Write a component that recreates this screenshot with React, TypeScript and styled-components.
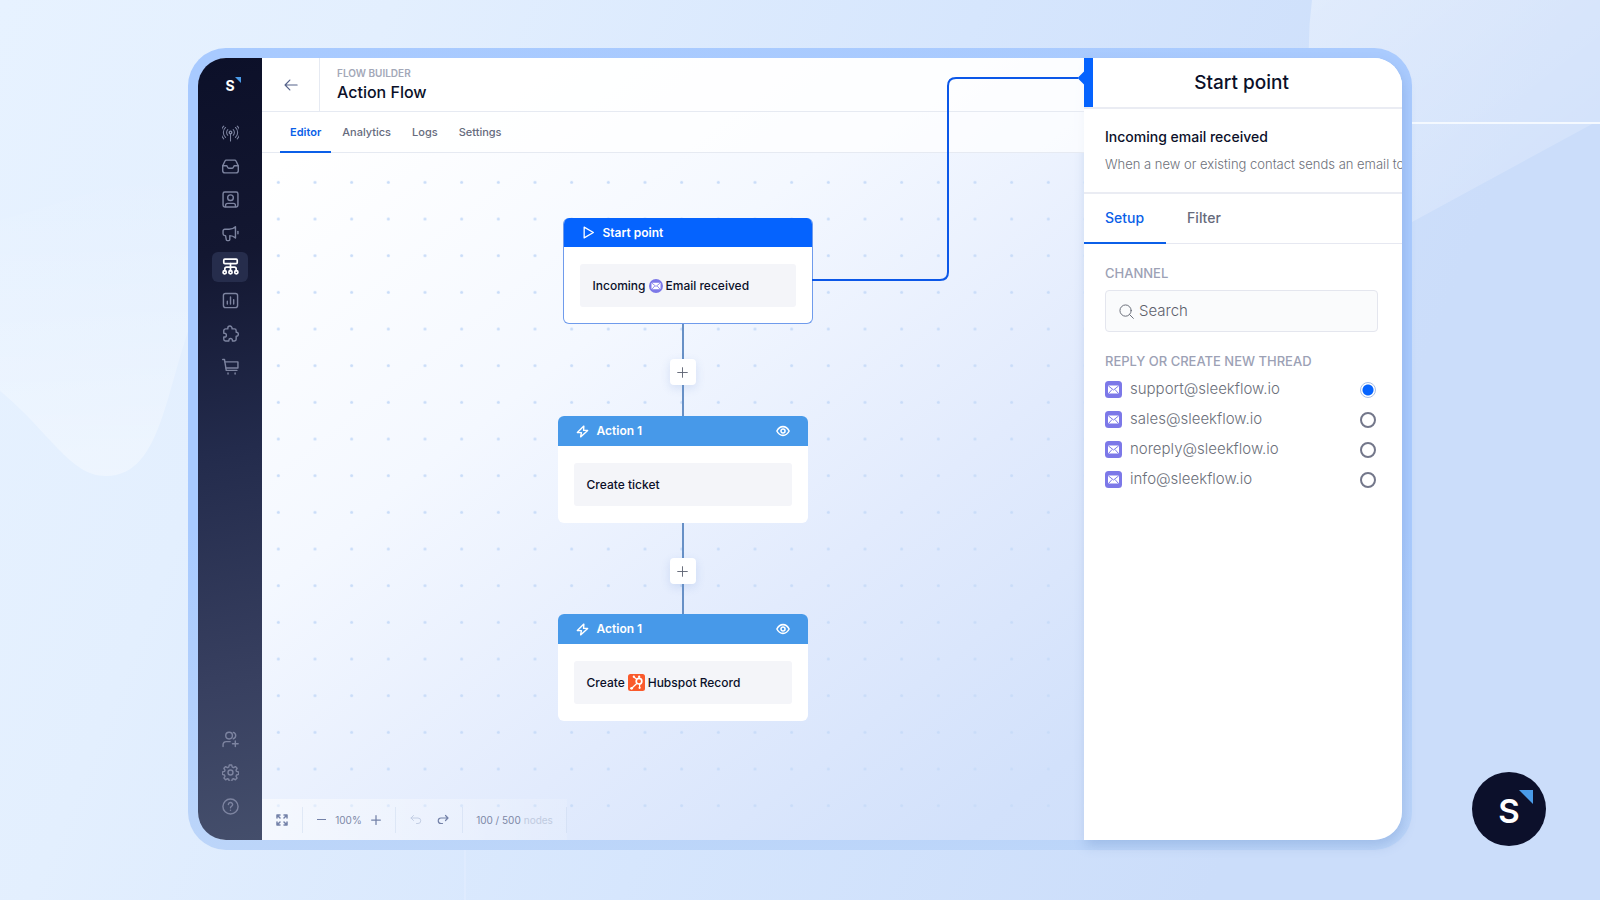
import React, { useState } from "react";
import styled, { createGlobalStyle, css } from "styled-components";

const GlobalStyle = createGlobalStyle`
  *, *::before, *::after { box-sizing: border-box; }
  body {
    margin: 0;
    font-family: Inter, "Liberation Sans", sans-serif;
    color: #0b1029;
    background: linear-gradient(112deg, #e7f2ff 0%, #e3effe 20%, #d6e6fd 50%, #cbddfa 80%, #cbddfa 100%);
  }
  button, input { font: inherit; color: inherit; }
  button { border: 0; padding: 0; background: none; cursor: pointer; }
  a { color: inherit; text-decoration: none; }
`;

const Page = styled.div`
  position: relative;
  min-height: 100vh;
  display: flex;
  padding: 48px 188px 50px;
  overflow: hidden;
`;

const Backdrop = styled.svg`
  position: absolute;
  inset: 0;
  width: 100%;
  height: 100%;
`;

const Frame = styled.div`
  position: relative;
  flex: 1;
  display: flex;
  padding: 10px;
  border-radius: 38px;
  background: linear-gradient(180deg, rgba(168, 202, 255, 0) 60%, rgba(193, 216, 248, 0.8) 100%),
    linear-gradient(90deg, #a8caff, #aacbfe);
`;

const Screen = styled.div`
  flex: 1;
  display: flex;
  min-width: 0;
  border-radius: 30px;
  background: linear-gradient(142deg, #ffffff 10%, #f4f8ff 34%, #e2ebfd 58%, #d2e1fb 80%, #cbddfa 100%);
`;

const Sidebar = styled.nav`
  width: 64px;
  flex: none;
  display: flex;
  flex-direction: column;
  align-items: center;
  padding: 16px 0 19px;
  border-radius: 28px 0 0 28px;
  background: linear-gradient(170deg, #0c1029 0%, #131731 25%, #232b4c 50%, #384060 80%, #444e6b 100%);
`;

const Wordmark = styled.a<{ $size: number }>`
  position: relative;
  display: grid;
  place-items: center;
  width: ${(p) => p.$size}px;
  height: ${(p) => p.$size}px;
  color: #fff;
  font-weight: 600;
`;

const SmallMark = styled(Wordmark)`
  font-size: 14px;
  font-weight: 700;
  line-height: 24px;
  svg { position: absolute; top: 3px; right: 0; }
`;

const NavList = styled.div<{ $height: number; $top?: boolean }>`
  display: flex;
  flex-direction: column;
  justify-content: space-between;
  height: ${(p) => p.$height}px;
  ${(p) => (p.$top ? "margin-top: 22px;" : "margin-top: auto;")}
`;

const NavButton = styled.button<{ $active?: boolean }>`
  display: grid;
  place-items: center;
  width: 36px;
  height: 30px;
  border-radius: 6px;
  color: ${(p) => (p.$active ? "#ffffff" : "#7d84a0")};
  background: ${(p) => (p.$active ? "#262d4c" : "transparent")};
`;

const Main = styled.main`
  position: relative;
  flex: 1;
  min-width: 0;
  display: flex;
  flex-direction: column;
`;

const TopBar = styled.header`
  display: flex;
  height: 54px;
  border-bottom: 1px solid #e6eaf2;
  background: rgba(255, 255, 255, 0.8);
`;

const BackButton = styled.button`
  display: grid;
  place-items: center;
  width: 58px;
  border-right: 1px solid #e6eaf2;
  color: #55628a;
`;

const Titles = styled.div`
  padding: 8px 0 0 17px;
`;

const Eyebrow = styled.div`
  font-size: 10px;
  font-weight: 600;
  line-height: 14px;
  color: #a3a8b8;
`;

const Title = styled.h1`
  margin: 0;
  font-size: 16px;
  font-weight: 500;
  line-height: 24px;
`;

const Tabs = styled.div`
  display: flex;
  gap: 1px;
  height: 41px;
  padding-left: 18px;
  border-bottom: 1px solid #e6eaf2;
  background: rgba(255, 255, 255, 0.7);
`;

const Tab = styled.button<{ $active?: boolean }>`
  height: 41px;
  padding: 0 10px;
  font-size: 11px;
  font-weight: ${(p) => (p.$active ? 600 : 500)};
  line-height: 40px;
  color: ${(p) => (p.$active ? "#0b5fe8" : "#666b7d")};
  border-bottom: 2px solid ${(p) => (p.$active ? "#0b5fe8" : "transparent")};
`;

const Canvas = styled.section`
  position: relative;
  flex: 1;
  display: flex;
  flex-direction: column;
  padding: 65px 0 0;
`;

const Dots = styled.svg`
  position: absolute;
  inset: 0;
  width: 100%;
  height: 100%;
`;

const Flow = styled.div`
  position: relative;
  display: flex;
  flex-direction: column;
  align-items: center;
  padding-left: 19px;
`;

const Node = styled.article<{ $start?: boolean }>`
  width: 250px;
  height: 107px;
  border-radius: 6px;
  overflow: hidden;
  background: #fff;
  ${(p) =>
    p.$start &&
    css`
      height: 106px;
      border: 1px solid #6f9bec;
      border-top: 0;
      margin-left: 10px;
    `}
`;

const NodeHead = styled.header<{ $start?: boolean }>`
  display: flex;
  align-items: center;
  gap: 8px;
  height: ${(p) => (p.$start ? 29 : 30)}px;
  padding: 0 18px;
  color: #fff;
  font-size: 12px;
  font-weight: 600;
  line-height: 16px;
  background: ${(p) => (p.$start ? "#0563fe" : "#4799e9")};
`;

const NodeName = styled.span`
  flex: 1;
`;

const NodeBody = styled.div`
  display: flex;
  align-items: center;
  gap: 3px;
  height: 43px;
  margin: 17px 16px;
  padding: 0 13px;
  border-radius: 3px;
  background: #f4f5f9;
  font-size: 12px;
  font-weight: 500;
  line-height: 16px;
`;

const Link = styled.div<{ $height: number }>`
  width: 2px;
  height: ${(p) => p.$height}px;
  background: #6790c6;
`;

const AddButton = styled.button`
  display: grid;
  place-items: center;
  width: 26px;
  height: 26px;
  border-radius: 4px;
  background: #fff;
  color: #5d6272;
  box-shadow: 0 3px 10px rgba(70, 110, 190, 0.16);
`;

const Footer = styled.footer`
  position: absolute;
  left: 0;
  bottom: 0;
  display: flex;
  align-items: center;
  height: 41px;
  background: linear-gradient(90deg, rgba(255, 255, 255, 0.5), rgba(255, 255, 255, 0.12));
  color: #7d88a6;
  font-size: 10px;
  line-height: 16px;
`;

const FooterGroup = styled.div<{ $width: number; $gap?: number }>`
  display: flex;
  align-items: center;
  justify-content: center;
  gap: ${(p) => p.$gap ?? 8}px;
  width: ${(p) => p.$width}px;
  height: 26px;
  border-right: 1px solid rgba(190, 205, 232, 0.35);
  white-space: nowrap;
`;

const IconButton = styled.button<{ $faint?: boolean }>`
  display: grid;
  place-items: center;
  color: ${(p) => (p.$faint ? "#c3cee4" : "#7381a8")};
`;

const Faint = styled.span`
  color: #c0cbe0;
`;

const Wire = styled.svg`
  position: absolute;
  top: 0;
  right: 0;
  width: 272px;
  height: 240px;
  pointer-events: none;
`;

const Panel = styled.aside`
  flex: none;
  width: 318px;
  overflow: hidden;
  border-radius: 0 28px 28px 0;
  background: #fff;
`;

const PanelShade = styled.div`
  display: flex;
  border-radius: 0 28px 28px 0;
  box-shadow: 2px 6px 12px rgba(90, 130, 190, 0.28);
`;

const PanelHead = styled.header`
  height: 51px;
  border-bottom: 2px solid #eaecf3;
  background: linear-gradient(90deg, #0563fe 9px, #fff 9px);
  background-clip: padding-box;
  padding-right: 3px;
`;

const PanelTitle = styled.h2`
  margin: 0;
  text-align: center;
  font-size: 19px;
  font-weight: 500;
  line-height: 49px;
`;

const Summary = styled.div`
  height: 85px;
  padding: 16px 0 0 21px;
  border-bottom: 2px solid #eaecf3;
  white-space: nowrap;
`;

const SummaryTitle = styled.h3`
  margin: 0;
  font-size: 14px;
  font-weight: 500;
  line-height: 24px;
`;

const SummaryText = styled.p`
  margin: 5px 0 0;
  font-size: 13px;
  font-weight: 300;
  line-height: 20px;
  color: #6d7079;
`;

const PanelTabs = styled.div`
  display: flex;
  height: 50px;
  border-bottom: 1px solid #e6e8f1;
`;

const PanelTab = styled.button<{ $active?: boolean }>`
  height: 50px;
  padding: 0 22px 0 21px;
  font-size: 14px;
  font-weight: 500;
  line-height: 48px;
  color: ${(p) => (p.$active ? "#0b5fe8" : "#666a7b")};
  border-bottom: 2px solid ${(p) => (p.$active ? "#0b5fe8" : "transparent")};
`;

const PanelBody = styled.div`
  padding: 19px 24px 20px 21px;
`;

const labelStyle = css`
  display: block;
  padding: 0;
  font-size: 13px;
  font-weight: 500;
  line-height: 20px;
  color: #9ca1b5;
`;

const FieldLabel = styled.label`
  ${labelStyle}
`;

const SearchBox = styled.div`
  display: flex;
  align-items: center;
  gap: 5px;
  height: 42px;
  margin: 7px 0 19px;
  padding: 0 13px;
  border: 1px solid #e4e6ee;
  border-radius: 4px;
  background: #fafbfc;
  color: #6b6f7a;
`;

const SearchInput = styled.input`
  flex: 1;
  min-width: 0;
  padding: 0;
  border: 0;
  outline: 0;
  background: transparent;
  font-size: 15px;
  font-weight: 300;
  line-height: 20px;
  &::placeholder { color: #5d616c; opacity: 1; }
`;

const Choices = styled.fieldset`
  min-width: 0;
  margin: 0;
  padding: 0;
  border: 0;
`;

const Legend = styled.legend`
  ${labelStyle}
  margin-bottom: 3px;
`;

const Choice = styled.label`
  display: flex;
  align-items: center;
  gap: 8px;
  height: 30px;
  padding-right: 2px;
  color: #6b6f7a;
  font-size: 15px;
  font-weight: 300;
  line-height: 20px;
  cursor: pointer;
`;

const Radio = styled.input`
  appearance: none;
  width: 16px;
  height: 16px;
  margin: 2px 0 0 auto;
  border: 2px solid #73778a;
  border-radius: 50%;
  &:checked {
    border: 1px solid #a9bfe6;
    background: radial-gradient(circle, #0563fe 5px, #fff 6px);
  }
`;

const Bubble = styled(Wordmark)`
  position: absolute;
  right: 54px;
  bottom: 54px;
  border-radius: 50%;
  background: #0c102b;
  font-size: 33px;
  line-height: 40px;
  padding-top: 3px;
  svg { position: absolute; top: 18px; right: 13px; }
`;

type StrokeProps = { size?: number; width?: number; children: React.ReactNode };

const Stroke = ({ size = 17, width = 2, children }: StrokeProps) => (
  <svg width={size} height={size} viewBox="0 0 24 24" fill="none" stroke="currentColor"
    strokeWidth={width} strokeLinecap="round" strokeLinejoin="round" aria-hidden="true">
    {children}
  </svg>
);

const navIcons: { name: string; icon: React.ReactNode; active?: boolean }[] = [
  {
    name: "Channels",
    icon: (
      <>
        <circle cx="12" cy="10.500" r="1.800" />
        <path d="M12 12.500v10M8.200 14.500a5.500 5.500 0 0 1 0-8M15.800 14.500a5.500 5.500 0 0 0 0-8M5 17.500a9.500 9.500 0 0 1 0-14M19 17.500a9.500 9.500 0 0 0 0-14M2.500 19.500a12.500 12.500 0 0 1 0-18M21.500 19.500a12.500 12.500 0 0 0 0-18" strokeWidth="1.500" />
      </>
    ),
  },
  {
    name: "Inbox",
    icon: (
      <>
        <path d="M6 3h12a2 2 0 0 1 1.800 1.200L23 11v7a3 3 0 0 1-3 3H4a3 3 0 0 1-3-3v-7l3.200-6.800A2 2 0 0 1 6 3z" />
        <path d="M1 11h5.500c1 0 1.200 3.500 3 3.500h5c1.800 0 2-3.500 3-3.500H23" />
      </>
    ),
  },
  {
    name: "Contacts",
    icon: (
      <>
        <rect x="1.500" y="1.500" width="21" height="21" rx="2.500" />
        <circle cx="12" cy="9.500" r="4" />
        <path d="M5 22v-1.500a3 3 0 0 1 3-3h8a3 3 0 0 1 3 3V22" />
      </>
    ),
  },
  {
    name: "Broadcasts",
    icon: (
      <>
        <path d="M4 6h6c4 0 7-1.500 9-3.500v16c-2-2-5-3.500-8-3.500v5.500a1.500 1.500 0 0 1-1.500 1.500H7.500A1.500 1.500 0 0 1 6 20.500L5 15H4a2.500 2.500 0 0 1-2.500-2.500v-4A2.500 2.500 0 0 1 4 6z" />
        <path d="M22.500 9v3.500" />
      </>
    ),
  },
  {
    name: "Flow builder",
    active: true,
    icon: (
      <g strokeWidth="2.400">
        <rect x="2.500" y="1.500" width="19" height="6.500" rx="1.500" />
        <path d="M12 8v10M4 18v-2.500A2.500 2.500 0 0 1 6.500 13h11a2.500 2.500 0 0 1 2.500 2.500V18" />
        <circle cx="3.800" cy="20" r="2.300" />
        <circle cx="12" cy="20" r="2.300" />
        <circle cx="20.200" cy="20" r="2.300" />
      </g>
    ),
  },
  {
    name: "Reports",
    icon: (
      <>
        <rect x="2" y="2" width="20" height="20" rx="3" />
        <path d="M7.500 17v-4M12 17V7M16.500 17v-6" />
      </>
    ),
  },
  {
    name: "Integrations",
    icon: (
      <path d="M8.200 5.500V4.500a3 3 0 0 1 6 0v1h3.300A2.500 2.500 0 0 1 20 8v2.200h.3a2.800 2.800 0 0 1 0 5.600H20V20a2.500 2.500 0 0 1-2.500 2.500h-2.800v-1a2.500 2.500 0 0 0-5 0v1H5A2.500 2.500 0 0 1 2.500 20v-3h1a2.700 2.700 0 0 0 0-5.400h-1V8A2.500 2.500 0 0 1 5 5.500z" />
    ),
  },
  {
    name: "Commerce",
    icon: (
      <>
        <path d="M1 2h2.500L6 17.500h15" />
        <path d="M4.200 5.500h18.300v8.500H5.500" />
        <path d="M8.500 21v1.500M18.500 21v1.500" />
      </>
    ),
  },
];

const utilityIcons: { name: string; icon: React.ReactNode }[] = [
  {
    name: "Invite users",
    icon: (
      <>
        <circle cx="10" cy="6.500" r="4.700" />
        <path d="M16 2a4.700 4.700 0 0 1 0 9M1.500 22v-2.500A4.500 4.500 0 0 1 6 15h5.500M18.800 14v8M14.800 18h8" />
      </>
    ),
  },
  {
    name: "Settings",
    icon: (
      <>
        <circle cx="12" cy="12" r="3.500" />
        <path d="M10.300 1.500h3.400l.8 3 1.800.7 2.600-1.500 2.400 2.400-1.500 2.600.7 1.800 3 .8v3.400l-3 .8-.7 1.800 1.500 2.600-2.400 2.400-2.600-1.500-1.800.7-.8 3h-3.400l-.8-3-1.800-.7-2.600 1.500-2.400-2.400 1.500-2.600-.7-1.800-3-.8v-3.400l3-.8.7-1.800-1.500-2.600 2.400-2.400 2.600 1.500 1.800-.7z" />
      </>
    ),
  },
  {
    name: "Help",
    icon: (
      <>
        <circle cx="12" cy="12" r="10.700" />
        <path d="M9 9.300a3 3 0 0 1 6 .2c0 2-3 2.300-3 4.300M12 17.300v.1" />
      </>
    ),
  },
];

const Corner = ({ size }: { size: number }) => (
  <svg width={size} height={size} viewBox="0 0 10 10" aria-hidden="true">
    <path d="M0 0h10v10z" fill="#4a9be8" />
  </svg>
);

const Envelope = ({ round }: { round?: boolean }) => (
  <svg width={round ? 14 : 17} height={round ? 14 : 17} viewBox="0 0 17 17" aria-hidden="true">
    <rect width="17" height="17" rx={round ? 8.5 : 3.5} fill="#7c78e8" />
    <rect x="3" y="4.500" width="11" height="8" rx="1" fill="#fff" />
    <path d="M3.500 5l5 4 5-4M3.500 12.500l3.500-4M13.500 12.500l-3.500-4" fill="none" stroke="#7c78e8" strokeWidth="1" />
  </svg>
);

const Hubspot = () => (
  <svg width="17" height="17" viewBox="0 0 17 17" aria-hidden="true">
    <rect width="17" height="17" rx="2.500" fill="#fa5a2c" />
    <g fill="none" stroke="#fff">
      <circle cx="11" cy="7.200" r="2.800" strokeWidth="1.700" />
      <path d="M11 4.500V2.500M8.800 5.300L5.500 2.800M9 9.200l-5 4.800M11.600 10v3.600" strokeWidth="1.200" />
    </g>
    <g fill="#fff">
      <circle cx="11.200" cy="2.600" r="1.100" />
      <circle cx="5.800" cy="2.700" r="1.100" />
      <circle cx="3.600" cy="14.300" r="1.400" />
      <circle cx="11.600" cy="13.800" r="1.100" />
    </g>
  </svg>
);

const BoltIcon = () => (
  <Stroke size={13} width={2.6}>
    <path d="M14.500 2L2.500 14h7.500L8.500 22 21.500 10h-7.500z" />
  </Stroke>
);

const EyeIcon = () => (
  <Stroke size={14} width={2.6}>
    <path d="M1.500 12C4 7 7.500 4.500 12 4.500S20 7 22.500 12C20 17 16.500 19.500 12 19.500S4 17 1.500 12z" />
    <circle cx="12" cy="12" r="3.500" />
  </Stroke>
);

const PlusIcon = ({ size = 12, width = 2.2 }) => (
  <Stroke size={size} width={width}>
    <path d="M12 1.500v21M1.500 12h21" />
  </Stroke>
);

const ActionNode = ({ children }: { children: React.ReactNode }) => (
  <Node>
    <NodeHead>
      <BoltIcon />
      <NodeName>Action 1</NodeName>
      <EyeIcon />
    </NodeHead>
    <NodeBody>{children}</NodeBody>
  </Node>
);

const AddStep = ({ tail = 30 }) => (
  <>
    <Link $height={35} />
    <AddButton aria-label="Add step">
      <PlusIcon size={11} width={2} />
    </AddButton>
    <Link $height={tail} />
  </>
);

const mailboxes = ["support@sleekflow.io", "sales@sleekflow.io", "noreply@sleekflow.io", "info@sleekflow.io"];
const editorTabs = ["Editor", "Analytics", "Logs", "Settings"];

export default function App() {
  const [mailbox, setMailbox] = useState(mailboxes[0]);

  return (
    <>
      <GlobalStyle />
      <Page>
        <Backdrop viewBox="0 0 1600 900" preserveAspectRatio="none" aria-hidden="true">
          <defs>
            <linearGradient id="wave" x1="0" y1="0" x2="0" y2="1">
              <stop offset="0" stopColor="#fff" stopOpacity="0" />
              <stop offset="1" stopColor="#fff" stopOpacity="0.360" />
            </linearGradient>
            <linearGradient id="sheet" x1="0" y1="0" x2="1" y2="1">
              <stop offset="0" stopColor="#fff" stopOpacity="0.360" />
              <stop offset="1" stopColor="#fff" stopOpacity="0.120" />
            </linearGradient>
          </defs>
          <path d="M0 220C60 205 130 175 200 170V300C165 380 165 476 106 476C70 476 50 432 0 391z" fill="url(#wave)" />
          <path d="M1312 0Q1308 30 1309 60L1412 222L1594 123H1600V0z" fill="url(#sheet)" />
          <path d="M1412 123H1600" stroke="#f4f9ff" strokeWidth="2" />
          <path d="M465 850V900" stroke="#dfebfe" strokeWidth="2" />
        </Backdrop>

        <Frame>
          <Screen>
            <Sidebar aria-label="Main">
              <SmallMark href="#" $size={22} aria-label="Home">
                S
                <Corner size={6} />
              </SmallMark>
              <NavList $height={264} $top>
                {navIcons.map((item) => (
                  <NavButton key={item.name} aria-label={item.name} $active={item.active}>
                    <Stroke>{item.icon}</Stroke>
                  </NavButton>
                ))}
              </NavList>
              <NavList $height={97}>
                {utilityIcons.map((item) => (
                  <NavButton key={item.name} aria-label={item.name}>
                    <Stroke>{item.icon}</Stroke>
                  </NavButton>
                ))}
              </NavList>
            </Sidebar>

            <Main>
              <TopBar>
                <BackButton aria-label="Back">
                  <Stroke size={14}>
                    <path d="M22.500 12H2M10 3.500L1.800 12l8.200 8.500" />
                  </Stroke>
                </BackButton>
                <Titles>
                  <Eyebrow>FLOW BUILDER</Eyebrow>
                  <Title>Action Flow</Title>
                </Titles>
              </TopBar>
              <Tabs>
                {editorTabs.map((name, i) => (
                  <Tab key={name} $active={i === 0}>
                    {name}
                  </Tab>
                ))}
              </Tabs>
              <Canvas>
                <Dots aria-hidden="true">
                  <pattern id="dots" width="110" height="110" patternUnits="userSpaceOnUse"
                    patternTransform="translate(-2 11) scale(.33333)">
                    <circle cx="55" cy="55" r="4.500" fill="#c8dcf9" />
                  </pattern>
                  <rect width="100%" height="100%" fill="url(#dots)" />
                </Dots>
                <Flow>
                  <Node $start>
                    <NodeHead $start>
                      <Stroke size={13} width={2.4}>
                        <path d="M4 2l17 10L4 22z" />
                      </Stroke>
                      <NodeName>Start point</NodeName>
                    </NodeHead>
                    <NodeBody>
                      Incoming <Envelope round /> Email received
                    </NodeBody>
                  </Node>
                  <AddStep tail={31} />
                  <ActionNode>Create ticket</ActionNode>
                  <AddStep />
                  <ActionNode>
                    Create <Hubspot /> Hubspot Record
                  </ActionNode>
                </Flow>
                <Footer>
                  <FooterGroup $width={41}>
                    <IconButton aria-label="Fit to screen">
                      <Stroke size={12} width={3}>
                        <path d="M2 8V2h6M2 2l6 6M16 2h6v6M22 2l-6 6M2 16v6h6M2 22l6-6M22 16v6h-6M22 22l-6-6" />
                      </Stroke>
                    </IconButton>
                  </FooterGroup>
                  <FooterGroup $width={93} $gap={9}>
                    <IconButton aria-label="Zoom out">
                      <Stroke size={9} width={3}>
                        <path d="M0 12h24" />
                      </Stroke>
                    </IconButton>
                    100%
                    <IconButton aria-label="Zoom in">
                      <PlusIcon size={10} width={3} />
                    </IconButton>
                  </FooterGroup>
                  <FooterGroup $width={67} $gap={15}>
                    <IconButton aria-label="Undo" $faint>
                      <Stroke size={12}>
                        <path d="M7 3L2 8l5 5M2 8h14a5.500 5.500 0 0 1 0 11h-3" />
                      </Stroke>
                    </IconButton>
                    <IconButton aria-label="Redo">
                      <Stroke size={12} width={2.4}>
                        <path d="M17 3l5 5-5 5M22 8H8a5.500 5.500 0 0 0 0 11h3" />
                      </Stroke>
                    </IconButton>
                  </FooterGroup>
                  <FooterGroup $width={104} $gap={3}>
                    100 / 500 <Faint>nodes</Faint>
                  </FooterGroup>
                </Footer>
              </Canvas>
              <Wire viewBox="0 0 272 240" aria-hidden="true">
                <path d="M0 222H128Q136 222 136 214V28Q136 20 144 20H266" fill="none" stroke="#0b57e8" strokeWidth="2" />
                <path d="M267 20l6-6v12z" fill="#0563fe" stroke="#0563fe" strokeWidth="2" strokeLinejoin="round" />
              </Wire>
            </Main>

            <PanelShade>
              <Panel>
                <PanelHead>
                  <PanelTitle>Start point</PanelTitle>
                </PanelHead>
                <Summary>
                  <SummaryTitle>Incoming email received</SummaryTitle>
                  <SummaryText>When a new or existing contact sends an email to</SummaryText>
                </Summary>
                <PanelTabs>
                  <PanelTab $active>Setup</PanelTab>
                  <PanelTab>Filter</PanelTab>
                </PanelTabs>
                <PanelBody>
                  <FieldLabel htmlFor="channel">CHANNEL</FieldLabel>
                  <SearchBox>
                    <Stroke size={15} width={1.6}>
                      <circle cx="10.500" cy="10.500" r="9" />
                      <path d="M17 17l6 6" />
                    </Stroke>
                    <SearchInput id="channel" type="text" placeholder="Search" />
                  </SearchBox>
                  <Choices>
                    <Legend>REPLY OR CREATE NEW THREAD</Legend>
                    {mailboxes.map((address) => (
                      <Choice key={address}>
                        <Envelope />
                        {address}
                        <Radio type="radio" name="mailbox" value={address} checked={mailbox === address}
                          onChange={() => setMailbox(address)} />
                      </Choice>
                    ))}
                  </Choices>
                </PanelBody>
              </Panel>
            </PanelShade>
          </Screen>
        </Frame>

        <Bubble href="#" $size={74} aria-label="SleekFlow">
          S
          <Corner size={14} />
        </Bubble>
      </Page>
    </>
  );
}
